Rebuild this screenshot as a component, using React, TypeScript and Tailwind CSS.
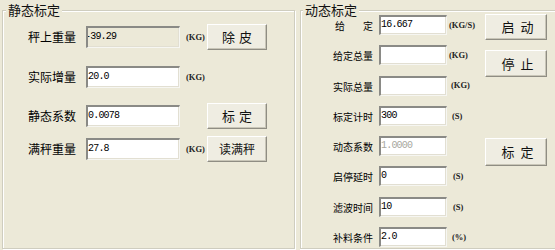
import React from "react";

const CJK = "font-['Noto_Sans_CJK_SC','Noto_Sans',sans-serif]";
const MONO = "font-['Liberation_Mono',monospace]";

function Field({
  value,
  w,
  h,
  disabled,
  gray,
  pt,
  indent,
}: {
  value: string;
  w: string;
  h: string;
  disabled?: boolean;
  gray?: boolean;
  pt: string;
  indent?: boolean;
}) {
  return (
    <div
      className={`${w} ${h} ${pt} shrink-0 overflow-hidden whitespace-nowrap border-t-2 border-l-2 border-b border-r border-t-[#8a8a86] border-l-[#8a8a86] border-b-[#f6f6f2] border-r-[#f6f6f2] shadow-[inset_-1px_-1px_0_#e2dfd2] ${
        disabled ? "bg-[#ECE9D8]" : "bg-white"
      } ${MONO} text-[10px] leading-[11px] tracking-[-0.8px] ${
        gray ? "text-[#a8a8a0]" : "text-black"
      } ${indent ? "-indent-[3px] pl-0" : "pl-0"}`}
    >
      {value}
    </div>
  );
}

function Btn({ label, w, h, size, cls, track }: { label: string; w: string; h: string; size: string; cls?: string; track?: string }) {
  return (
    <div
      className={`${w} ${h} ${cls ?? ""} shrink-0 flex items-center justify-center bg-[#EFEDE2] border-t border-l border-t-white border-l-white border-b border-r border-b-[#8f8d83] border-r-[#8f8d83] shadow-[inset_-1px_-1px_0_#c9c6b8] ${CJK} ${size} text-[#111] whitespace-nowrap`}
    >
      <span className={track ?? ""}>{label}</span>
    </div>
  );
}

function Unit({ text, cls }: { text: string; cls?: string }) {
  return (
    <span className={`font-['Liberation_Serif',serif] font-bold text-[8.5px] leading-none text-[#222] whitespace-nowrap ${cls ?? ""}`}>
      {text}
    </span>
  );
}

function LeftRow({
  label,
  value,
  unit,
  button,
  btnSize,
  btnTrack,
  disabled,
  mt,
  indent,
}: {
  label: string;
  value: string;
  unit?: string;
  button?: string;
  btnSize?: string;
  btnTrack?: string;
  disabled?: boolean;
  mt: string;
  indent?: boolean;
}) {
  return (
    <div className={`flex items-center h-[26px] ${mt}`}>
      <div className={`w-[48px] shrink-0 ${CJK} text-[12px] leading-[14px] text-black whitespace-nowrap`}>{label}</div>
      <div className="ml-[10px]">
        <Field value={value} w="w-[94px]" h="h-[22px]" pt="pt-[3px]" disabled={disabled} indent={indent} />
      </div>
      <div className="w-[27px] pl-[6px] shrink-0 flex items-center">{unit ? <Unit text={unit} /> : null}</div>
      {button ? (
        <Btn label={button} w="w-[60px]" h="h-[26px]" size={btnSize ?? "text-[13px]"} track={btnTrack} />
      ) : null}
    </div>
  );
}

function RightRow({
  label,
  value,
  unit,
  gray,
  justify,
  unitCls,
}: {
  label: string;
  value: string;
  unit?: string;
  gray?: boolean;
  justify?: boolean;
  unitCls?: string;
}) {
  return (
    <div className="flex items-center h-[20px] pl-[34px]">
      <div
        className={`w-[38px] shrink-0 pt-[2px] ${CJK} text-[10px] leading-[12px] text-black whitespace-nowrap flex ${
          justify ? "justify-between" : "justify-end"
        }`}
      >
        {justify ? (
          <>
            <span>给</span>
            <span>定</span>
          </>
        ) : (
          label
        )}
      </div>
      <div className="ml-[6px]">
        <Field value={value} w="w-[68px]" h="h-[20px]" pt="pt-[2px]" gray={gray} />
      </div>
      {unit ? <Unit text={unit} cls={unitCls ?? "ml-[4px]"} /> : null}
    </div>
  );
}

export default function App() {
  return (
    <div className="w-[555px] h-[250px] bg-[#ECE9D8] overflow-hidden flex items-start pt-[3px] pl-[2px]">
      {/* 静态标定 */}
      <fieldset className="w-[293px] h-[246px] shrink-0 border border-[#cfcdbf] shadow-[inset_1px_1px_0_#fff,1px_1px_0_#fff] min-w-0">
        <legend className={`ml-[3px] px-[2px] bg-[#ECE9D8] ${CJK} text-[13px] leading-[14px] text-[#111]`}>静态标定</legend>
        <div className="flex flex-col pl-[25px]">
          <LeftRow label="秤上重量" value="-39.29" unit="(KG)" button="除皮" btnTrack="tracking-[4px] pl-[4px]" disabled mt="mt-[7px]" indent />
          <LeftRow label="实际增量" value="20.0" unit="(KG)" mt="mt-[14px]" />
          <LeftRow label="静态系数" value="0.0078" button="标定" btnTrack="tracking-[4px] pl-[4px]" mt="mt-[13px]" />
          <LeftRow label="满秤重量" value="27.8" unit="(KG)" button="读满秤" btnSize="text-[12px]" mt="mt-[7px]" />
        </div>
      </fieldset>

      {/* 动态标定 */}
      <div className="ml-[5px] w-[320px] shrink-0">
        <fieldset className="w-[320px] h-[246px] border-t border-l border-b border-t-[#cfcdbf] border-l-[#cfcdbf] border-b-[#cfcdbf] shadow-[inset_1px_1px_0_#fff,0_1px_0_#fff] min-w-0">
          <legend className={`ml-[2px] px-[2px] bg-[#ECE9D8] ${CJK} text-[13px] leading-[14px] text-[#111]`}>动态标定</legend>
          <div className="flex">
            <div className="w-[184px] shrink-0 flex flex-col gap-[10.3px] mt-[-2px]">
              <RightRow label="给定" justify value="16.667" unit="(KG/S)" unitCls="ml-[2px]" />
              <RightRow label="给定总量" value="" unit="(KG)" unitCls="ml-[2px]" />
              <RightRow label="实际总量" value="" unit="(KG)" />
              <RightRow label="标定计时" value="300" unit="(S)" unitCls="ml-[5px]" />
              <RightRow label="动态系数" value="1.0000" gray />
              <RightRow label="启停延时" value="0" unit="(S)" unitCls="ml-[6px]" />
              <RightRow label="滤波时间" value="10" unit="(S)" unitCls="ml-[6px]" />
              <RightRow label="补料条件" value="2.0" unit="(%)" unitCls="ml-[5px]" />
            </div>
            <div className="flex flex-col">
              <Btn label="启动" w="w-[62px]" h="h-[26px]" size="text-[13px]" cls="mt-[-3px]" track="tracking-[6px] pl-[9px]" />
              <Btn label="停止" w="w-[62px]" h="h-[27px]" size="text-[13px]" cls="mt-[10px]" track="tracking-[6px] pl-[9px]" />
              <Btn label="标定" w="w-[62px]" h="h-[28px]" size="text-[13px]" cls="mt-[61px]" track="tracking-[6px] pl-[9px]" />
            </div>
          </div>
        </fieldset>
      </div>
    </div>
  );
}
